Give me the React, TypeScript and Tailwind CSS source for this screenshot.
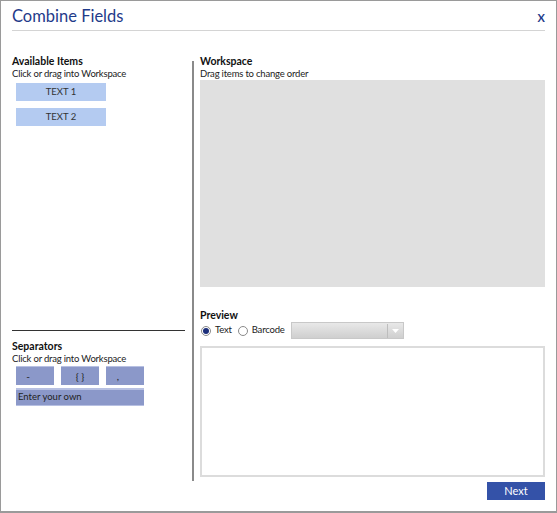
import React from "react";

const font = { fontFamily: 'Lato, "Open Sans", sans-serif' };

const Radio = ({ checked, label }: { checked?: boolean; label: string }) => (
  <label className="flex items-center gap-[4px] text-[9.5px] tracking-[-0.2px] text-[#222]">
    <span className="flex h-[10px] w-[10px] items-center justify-center rounded-full border border-[#8a8a8a] bg-white">
      {checked && <span className="h-[6px] w-[6px] rounded-full bg-[#1c2f7a]" />}
    </span>
    {label}
  </label>
);

export default function App() {
  return (
    <div
      style={font}
      className="flex h-[513px] w-[557px] flex-col border border-b-2 border-[#9a9a9a] bg-white"
    >
      {/* header */}
      <div className="mx-[11px] flex h-[30px] items-center justify-between border-b border-[#d4d4d4]">
        <h1 className="text-[16.5px] leading-[26px] text-[#1f3b8a]">Combine Fields</h1>
        <span className="mt-[5px] text-[11px] font-bold text-[#1f3b8a]">X</span>
      </div>

      <div className="flex">
        {/* left column */}
        <div className="ml-[11px] flex w-[173px] flex-col pt-[23px]">
          <div className="text-[10.5px] font-bold leading-[14px] text-[#111]">Available Items</div>
          <div className="text-[9.5px] leading-[12px] tracking-[-0.2px] text-[#222]">Click or drag into Workspace</div>
          <div className="mt-[3px] flex flex-col gap-[7px] pl-[4px]">
            <button className="h-[18px] w-[90px] bg-[#b4cbf1] text-[9.5px] text-[#333]">TEXT 1</button>
            <button className="h-[18px] w-[90px] bg-[#b4cbf1] text-[9.5px] text-[#333]">TEXT 2</button>
          </div>

          <div className="mt-[204px] h-px w-[173px] bg-[#333]" />
          <div className="mt-[8px] text-[10.5px] font-bold leading-[14px] text-[#111]">Separators</div>
          <div className="text-[9.5px] leading-[12px] tracking-[-0.2px] text-[#222]">Click or drag into Workspace</div>
          <div className="mt-[1px] flex gap-[7px] pl-[4px]">
            <button className="h-[19px] w-[38px] border-t border-[#b7c0e2] bg-[#8b98c9] pr-[14px] text-[10px] text-[#222]">-</button>
            <button className="h-[19px] w-[38px] border-t border-[#b7c0e2] bg-[#8b98c9] text-[10px] text-[#222]">{"{ }"}</button>
            <button className="h-[19px] w-[38px] border-t border-[#b7c0e2] bg-[#8b98c9] pr-[14px] text-[10px] text-[#222]">,</button>
          </div>
          <div className="ml-[4px] mt-[3px] flex h-[18px] w-[128px] items-center border-t-2 border-b border-[#b7c0e2] bg-[#8b98c9] pl-[2px] text-[9.5px] text-[#222]">
            Enter your own
          </div>
        </div>

        {/* divider */}
        <div className="ml-[7px] mt-[30px] h-[420px] w-[2px] bg-[#8a8a8a]" />

        {/* right column */}
        <div className="ml-[6px] flex w-[345px] flex-col pt-[23px]">
          <div className="text-[10.5px] font-bold leading-[14px] text-[#111]">Workspace</div>
          <div className="text-[9.5px] leading-[12px] tracking-[-0.2px] text-[#222]">Drag items to change order</div>
          <div className="h-[207px] w-[345px] bg-[#e0e0e0]" />

          <div className="mt-[21px] text-[10.5px] font-bold leading-[14px] text-[#111]">Preview</div>
          <div className="flex h-[17px] items-center gap-[6px] pl-[1px]">
            <Radio checked label="Text" />
            <Radio label="Barcode" />
            <div className="flex h-[17px] w-[113px] items-center justify-end border border-[#c8c8c8] bg-gradient-to-b from-[#e8e8e8] to-[#cfcfcf] pr-[4px]">
              <div className="h-[14px] w-px bg-[#bdbdbd]" />
              <svg width="7" height="4" viewBox="0 0 7 4" className="ml-[4px]">
                <path d="M0 0h7L3.5 4z" fill="#fff" />
              </svg>
            </div>
          </div>
          <div className="mt-[7px] h-[131px] w-[345px] border-2 border-[#dcdcdc]" />
          <button className="mt-[5px] h-[18px] w-[58px] self-end bg-[#3452a8] text-[11px] text-white">Next</button>
        </div>
      </div>
    </div>
  );
}
